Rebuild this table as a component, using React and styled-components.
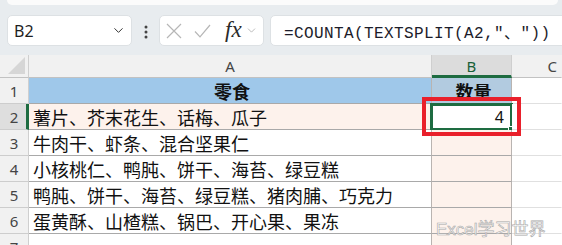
import React from "react";
import styled, { createGlobalStyle } from "styled-components";
import { ChevronDown } from "lucide-react";

const rows = [
  { n: 1, a: "零食", b: "数量", head: true },
  { n: 2, a: "薯片、芥末花生、话梅、瓜子", b: "4", active: true },
  { n: 3, a: "牛肉干、虾条、混合坚果仁" },
  { n: 4, a: "小核桃仁、鸭肫、饼干、海苔、绿豆糕" },
  { n: 5, a: "鸭肫、饼干、海苔、绿豆糕、猪肉脯、巧克力" },
  { n: 6, a: "蛋黄酥、山楂糕、锅巴、开心果、果冻" },
  { n: 7, a: "" },
];

const App = () => {
  return (
    <>
      <GlobalStyle />
      <Page>
        <RibbonEdge />
        <FormulaBar>
          <NameBox>
            <span>B2</span>
            <ChevronDown size={15} strokeWidth={1.6} color="#333" />
          </NameBox>
          <Grip>
            <svg width="4" height="14" viewBox="0 0 4 14">
              <circle cx="2" cy="2" r="1.5" fill="#444" />
              <circle cx="2" cy="7" r="1.5" fill="#444" />
              <circle cx="2" cy="12" r="1.5" fill="#444" />
            </svg>
          </Grip>
          <FxBox>
            <ToolIcon width="16" height="16" viewBox="0 0 16 16">
              <path d="M1 1 L15 15 M15 1 L1 15" stroke="#b6b6b6" strokeWidth="1.2" fill="none" />
            </ToolIcon>
            <ToolIcon width="17" height="14" viewBox="0 0 17 14" $gap={12}>
              <path d="M1 7.5 L6 12.8 L16 1" stroke="#b6b6b6" strokeWidth="1.2" fill="none" />
            </ToolIcon>
            <FxLabel>fx</FxLabel>
            <ChevronDown size={13} strokeWidth={1.4} color="#a8a8a8" />
          </FxBox>
          <FormulaInput>=COUNTA(TEXTSPLIT(A2,"、"))</FormulaInput>
        </FormulaBar>
        <Sheet>
          <Corner>
            <svg width="17" height="17" viewBox="0 0 17 17">
              <polygon points="17,0 17,17 0,17" fill="#d6d6d6" />
            </svg>
          </Corner>
          <ColHead>A</ColHead>
          <ColHead $selected>B</ColHead>
          <ColHead $last>C</ColHead>
          {rows.map((r) => (
            <React.Fragment key={r.n}>
              <RowHead $selected={r.active}>{r.n}</RowHead>
              <Cell
                $bg={r.head ? "#9fc8ea" : r.active ? "#fdf2ec" : "#fff"}
                $bold={r.head}
                $center={r.head}
              >
                {r.a}
              </Cell>
              <Cell
                $bg={r.head ? "#b2cbe0" : r.active ? "#fff" : "#fdf2ec"}
                $bold={r.head}
                $center={r.head}
                $num={r.active}
              >
                {r.b}
                {r.active && (
                  <Selection>
                    <FillHandle />
                  </Selection>
                )}
              </Cell>
              <Cell $light />
            </React.Fragment>
          ))}
          <Marker />
          <Watermark>Excel学习世界</Watermark>
        </Sheet>
      </Page>
    </>
  );
};

export default App;

const GlobalStyle = createGlobalStyle`
  html, body {
    margin: 0;
    padding: 0;
    background: #e8ecef;
    overflow: hidden;
  }
  * {
    box-sizing: border-box;
  }
`;

const Page = styled.div`
  width: 562px;
  height: 245px;
  background: #e8ecef;
  font-family: "Noto Sans", "Noto Sans CJK SC", sans-serif;
  overflow: hidden;
`;

const RibbonEdge = styled.div`
  height: 5px;
  margin: 0 4px 0 7px;
  background: #fbfbfb;
  border-radius: 0 0 6px 6px;
`;

const FormulaBar = styled.div`
  display: flex;
  align-items: center;
  height: 31px;
  margin-top: 10px;
  padding-left: 7px;
`;

const Box = styled.div`
  height: 31px;
  background: #fff;
  border: 1px solid #dde1e4;
  border-radius: 5px;
  display: flex;
  align-items: center;
`;

const NameBox = styled(Box)`
  width: 125px;
  justify-content: space-between;
  padding: 0 5px 0 6px;
  font-size: 16px;
  color: #1f1f1f;
`;

const Grip = styled.div`
  width: 27px;
  display: flex;
  justify-content: center;
  padding-top: 2px;
`;

const FxBox = styled(Box)`
  width: 105px;
  padding: 0 4px 0 6px;
`;

const ToolIcon = styled.svg`
  flex: none;
  margin-left: ${(p) => (p.$gap ? `${p.$gap}px` : "0")};
`;

const FxLabel = styled.span`
  font-family: "Liberation Serif", "DejaVu Serif", serif;
  font-style: italic;
  font-size: 23px;
  color: #2a2a2a;
  margin-left: 14px;
  margin-right: 3px;
  line-height: 1;
  padding-bottom: 3px;
`;

const FormulaInput = styled(Box)`
  flex: 1;
  margin-left: 6px;
  margin-right: -12px;
  padding-left: 13px;
  font-family: "Liberation Mono", "Noto Sans CJK SC", monospace;
  font-size: 16px;
  letter-spacing: 0.4px;
  color: #1c1c2a;
`;

const Sheet = styled.div`
  position: relative;
  margin-top: 9px;
  display: grid;
  grid-template-columns: 29px 403px 80px 1fr;
  grid-template-rows: 23px repeat(6, 26px) 26px;
  background: #fff;
`;

const Corner = styled.div`
  background: #f1f1f1;
  border-right: 1px solid #cfcfcf;
  border-bottom: 1px solid #c2c2c2;
  display: flex;
  align-items: flex-end;
  justify-content: flex-end;
  padding: 0 3px 3px 0;
`;

const ColHead = styled.div`
  background: ${(p) => (p.$selected ? "#dcdcdc" : "#f1f1f1")};
  border-right: 1px solid ${(p) => (p.$last ? "transparent" : "#cfcfcf")};
  border-bottom: ${(p) => (p.$selected ? "3px solid #1e6c41" : "1px solid #c2c2c2")};
  color: ${(p) => (p.$selected ? "#176038" : "#454545")};
  font-size: 15px;
  display: flex;
  align-items: center;
  justify-content: center;
  padding-top: ${(p) => (p.$selected ? "2px" : "0")};
  ${(p) => p.$last && "justify-content: flex-end; padding-right: 4px;"}
`;

const RowHead = styled.div`
  background: ${(p) => (p.$selected ? "#dedede" : "#f1f1f1")};
  border-right: ${(p) => (p.$selected ? "3px solid #1e6c41" : "1px solid #cfcfcf")};
  border-bottom: 1px solid #cdcdcd;
  color: #444;
  font-size: 15px;
  display: flex;
  align-items: center;
  justify-content: center;
  padding-left: ${(p) => (p.$selected ? "2px" : "0")};
`;

const Cell = styled.div`
  position: relative;
  background: ${(p) => p.$bg || "#fff"};
  border-right: 1px solid ${(p) => (p.$light ? "transparent" : "#b9b4b1")};
  border-bottom: 1px solid ${(p) => (p.$light ? "#e0e0e0" : "#a9a9a9")};
  font-family: ${(p) =>
    p.$num ? '"Noto Sans", sans-serif' : '"Noto Sans CJK SC", sans-serif'};
  font-size: ${(p) => (p.$num ? "16px" : "18px")};
  font-weight: ${(p) => (p.$bold ? 700 : 400)};
  color: #111;
  display: flex;
  align-items: center;
  justify-content: ${(p) =>
    p.$center ? "center" : p.$num ? "flex-end" : "flex-start"};
  padding: ${(p) => (p.$num ? "0 7px 0 0" : "0 0 0 4px")};
  white-space: nowrap;
  overflow: visible;
`;

const Selection = styled.div`
  position: absolute;
  left: -2px;
  top: -1px;
  right: -2px;
  bottom: -2px;
  border: 3px solid #1e6c41;
  pointer-events: none;
`;

const FillHandle = styled.div`
  position: absolute;
  right: -4px;
  bottom: -4px;
  width: 6px;
  height: 6px;
  background: #1e6c41;
  border: 1px solid #fff;
`;

const Marker = styled.div`
  position: absolute;
  left: 422px;
  top: 42px;
  width: 99px;
  height: 39px;
  border: 4px solid #e9202b;
  pointer-events: none;
`;

const Watermark = styled.div`
  position: absolute;
  left: 436px;
  top: 160px;
  font-family: "Liberation Sans", "Noto Sans CJK SC", sans-serif;
  font-size: 17px;
  color: rgba(255, 255, 255, 0.85);
  -webkit-text-stroke: 0.6px #a8a8a8;
  pointer-events: none;
`;
